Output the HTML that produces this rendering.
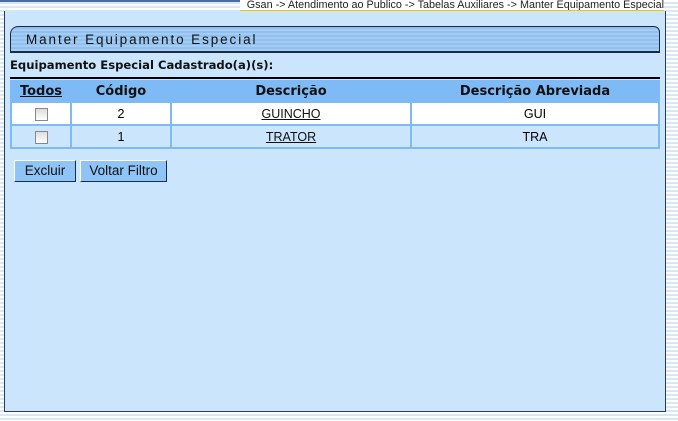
<!DOCTYPE html><html><head><style>
body{margin:0;width:678px;height:421px;overflow:hidden;position:relative;font-family:"Liberation Sans",sans-serif;
background:repeating-linear-gradient(#fff 0,#fff 2px,#d6e8f6 2px,#d6e8f6 4px);}
#bc{position:absolute;left:240px;top:0;width:424px;height:10px;background:#fff;border-bottom:2px solid #f6c700;font-size:10.8px;line-height:11px;text-align:right;color:#222;white-space:nowrap;overflow:hidden}
#topl{position:absolute;left:0;top:0;width:240px;height:2px;background:#4a6ea0}
#panel{position:absolute;left:4px;top:11px;width:660px;height:400px;background:#cbe5fd;border:1px solid #2a3a55;border-top:none}
#title{position:absolute;left:10px;top:26px;width:648px;height:24px;border:1px solid #1a2a40;border-bottom-width:2px;border-radius:8px 6px 0 0;
background:repeating-linear-gradient(#8fc0ef 0,#8fc0ef 2px,#a5cdf3 2px,#a5cdf3 4px);}
#title span{position:absolute;left:15px;top:5px;font-size:13.5px;letter-spacing:1.9px;color:#111}
#sub{position:absolute;left:10px;top:58px;font-weight:bold;color:#111;font-family:"DejaVu Sans",sans-serif;font-size:11.6px}
#line{position:absolute;left:10px;top:77px;width:650px;height:2px;background:#000}
table{position:absolute;left:10px;top:80px;width:650px;table-layout:fixed;border-collapse:separate;border-spacing:2px;background:#7ebaf6;font-size:12.5px}
td,th{text-align:center;height:21px;padding:0;white-space:nowrap}
th{background:#7ebaf6;font-family:"DejaVu Sans",sans-serif;font-size:13px;font-weight:bold;color:#111;height:19px}
tr.a td{background:#fff}tr.b td{background:#cbe5fd}
u{color:#111}
.cb{display:inline-block;width:11px;height:11px;border:1px solid #888;background:linear-gradient(#ddd,#fff);vertical-align:middle}
.btn{position:absolute;top:160px;height:20px;background:#8fc4f6;border:1px solid #fff;border-right-color:#1a2a50;border-bottom-color:#1a2a50;font-size:13.5px;line-height:20px;text-align:center;color:#111}
</style></head><body>
<div id="topl"></div>
<div id="bc">Gsan -&gt; Atendimento ao Publico -&gt; Tabelas Auxiliares -&gt; Manter Equipamento Especial</div>
<div id="panel"></div>
<div id="title"><span>Manter Equipamento Especial</span></div>
<div id="sub">Equipamento Especial Cadastrado(a)(s):</div>
<div id="line"></div>
<table>
<colgroup><col style="width:58px"><col style="width:98px"><col style="width:238px"><col></colgroup>
<tr><th><u>Todos</u></th><th>Código</th><th>Descrição</th><th>Descrição Abreviada</th></tr>
<tr class="a"><td><span class="cb"></span></td><td>2</td><td><u>GUINCHO</u></td><td>GUI</td></tr>
<tr class="b"><td><span class="cb"></span></td><td>1</td><td><u>TRATOR</u></td><td>TRA</td></tr>
</table>
<div class="btn" style="left:14px;width:60px">Excluir</div>
<div class="btn" style="left:80px;width:85px">Voltar Filtro</div>
</body></html>
